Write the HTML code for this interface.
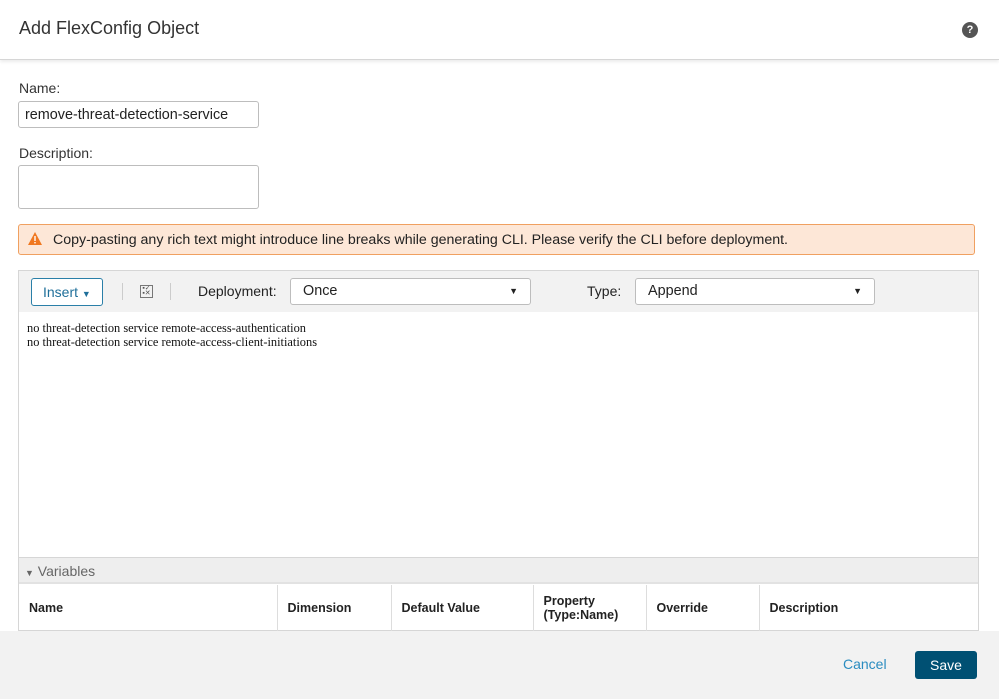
<!DOCTYPE html>
<html><head><style>
*{box-sizing:border-box;margin:0;padding:0}
body{width:999px;height:699px;overflow:hidden;background:#fff;font-family:"Liberation Sans",sans-serif;color:#222;position:relative}
.a{position:absolute}
.lbl{font-size:14px;color:#333}
.inp{border:1px solid #bdbdbd;border-radius:3px;background:#fff;font-size:14.4px;padding:5px 6px}
th{font-weight:bold;font-size:12.5px;text-align:left;padding-left:10px;border-right:1px solid #ddd;color:#222}
</style></head><body>
<div class="a" style="left:0;top:0;width:999px;height:60px;border-bottom:1px solid #d6d6d6;box-shadow:0 2px 3px rgba(0,0,0,.08)"></div>
<div class="a" style="left:19px;top:18px;font-size:18px;color:#333">Add FlexConfig Object</div>
<div class="a" style="left:962px;top:22px;width:16px;height:16px;border-radius:50%;background:#555;color:#fff;font-size:11px;font-weight:bold;text-align:center;line-height:16px">?</div>
<div class="a lbl" style="left:19px;top:80px">Name:</div>
<div class="a inp" style="left:18px;top:101px;width:241px;height:27px;padding-top:5px">remove-threat-detection-service</div>
<div class="a lbl" style="left:19px;top:145px">Description:</div>
<div class="a inp" style="left:18px;top:165px;width:241px;height:44px"></div>
<div class="a" style="left:18px;top:224px;width:957px;height:31px;background:#fde7d7;border:1px solid #f0a060;border-radius:3px;font-size:14.2px;padding:7px 0 0 34px;color:#222">Copy-pasting any rich text might introduce line breaks while generating CLI. Please verify the CLI before deployment.
<svg class="a" style="left:9px;top:7px" width="14" height="13" viewBox="0 0 14 13"><path d="M7 0L14 13H0Z" fill="#f07820"/><rect x="6.3" y="4" width="1.4" height="5" fill="#fff"/><rect x="6.3" y="10" width="1.4" height="1.4" fill="#fff"/></svg></div>
<div class="a" style="left:18px;top:270px;width:961px;height:361px;border:1px solid #d6d6d6"></div>
<div class="a" style="left:19px;top:271px;width:959px;height:41px;background:#f2f2f2"></div>
<div class="a" style="left:31px;top:278px;width:72px;height:28px;border:1px solid #2a7fa8;border-radius:3px;background:#fff;color:#1f6f9a;font-size:14px;padding:5px 0 0 11px">Insert <span style="font-size:9px">▼</span></div>
<div class="a" style="left:122px;top:283px;width:1px;height:17px;background:#ccc"></div>
<div class="a" style="left:170px;top:283px;width:1px;height:17px;background:#ccc"></div>
<div class="a" style="left:140px;top:285px;width:13px;height:13px;border:1px solid #777;font-size:7px;line-height:5px;color:#555;text-align:center">▪✓<br>▪✕</div>
<div class="a lbl" style="left:198px;top:283px;color:#222">Deployment:</div>
<div class="a inp" style="left:290px;top:278px;width:241px;height:27px;padding-left:12px;padding-top:4px;color:#222">Once<span class="a" style="right:12px;top:7px;font-size:9px">▼</span></div>
<div class="a lbl" style="left:587px;top:283px;color:#222">Type:</div>
<div class="a inp" style="left:635px;top:278px;width:240px;height:27px;padding-left:12px;padding-top:4px;color:#222">Append<span class="a" style="right:12px;top:7px;font-size:9px">▼</span></div>
<div class="a" style="left:27px;top:321px;font-family:'Liberation Serif',serif;font-size:12.4px;line-height:14px;color:#111">no threat-detection service remote-access-authentication<br>no threat-detection service remote-access-client-initiations</div>
<div class="a" style="left:19px;top:557px;width:959px;height:1px;background:#d6d6d6"></div>
<div class="a" style="left:19px;top:558px;width:959px;height:26px;background:#eeeeee;border-bottom:2px solid #e2e2e2;font-size:14px;color:#666;padding:5px 0 0 6px"><span style="font-size:9px">▼</span> Variables</div>
<table class="a" style="left:19px;top:585px;width:959px;height:46px;border-collapse:collapse">
<tr><th style="width:258px">Name</th><th style="width:114px">Dimension</th><th style="width:142px">Default Value</th><th style="width:113px">Property<br>(Type:Name)</th><th style="width:113px">Override</th><th style="border:none">Description</th></tr></table>
<div class="a" style="left:0;top:631px;width:999px;height:68px;background:#f2f2f2"></div>
<div class="a" style="left:843px;top:656px;font-size:14px;color:#2a8cc0">Cancel</div>
<div class="a" style="left:915px;top:651px;width:62px;height:28px;background:#005073;border-radius:3px;color:#fff;font-size:14px;text-align:center;line-height:28px">Save</div>
</body></html>
